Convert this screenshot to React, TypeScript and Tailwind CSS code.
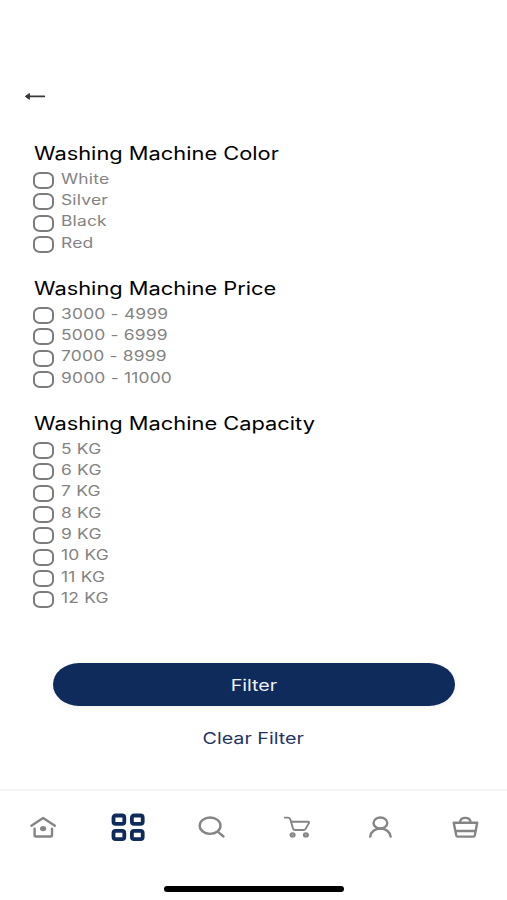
import React, { useState } from 'react';

interface FilterGroup {
  title: string;
  options: string[];
}

const FILTER_GROUPS: FilterGroup[] = [
  { title: 'Washing Machine Color', options: ['White', 'Silver', 'Black', 'Red'] },
  { title: 'Washing Machine Price', options: ['3000 - 4999', '5000 - 6999', '7000 - 8999', '9000 - 11000'] },
  {
    title: 'Washing Machine Capacity',
    options: ['5 KG', '6 KG', '7 KG', '8 KG', '9 KG', '10 KG', '11 KG', '12 KG'],
  },
];

const NavIcon: React.FC<{ children: React.ReactNode; label: string; active?: boolean }> = ({ children, label, active }) => (
  <button aria-label={label} className={active ? 'flex justify-center text-[#0f2b5b]' : 'flex justify-center text-[#858585]'}>
    <svg width="40" height="30" viewBox="0 0 40 30" fill="none" stroke="currentColor" strokeWidth="2.4" strokeLinecap="round" strokeLinejoin="round">
      {children}
    </svg>
  </button>
);

const BottomNav: React.FC = () => (
  <nav className="h-[111px] border-t-2 border-[#f5f5f5] pt-[21px]">
    <div className="grid grid-cols-6">
      <NavIcon label="Home">
        <path d="M9.4 13.7 21.1 6l11.8 7.7M12.6 16.8v6.4q0 1.3 1.5 1.3h14.4q1.5 0 1.5-1.3v-6.4" />
        <ellipse cx="21.1" cy="16.6" rx="3.1" ry="2.7" fill="currentColor" stroke="none" />
      </NavIcon>
      <NavIcon label="Categories" active>
        <g strokeWidth="3.8">
          <rect x="6.5" y="3.5" width="10.8" height="8.4" rx="2.2" />
          <rect x="24.9" y="3.5" width="10.8" height="8.4" rx="2.2" />
          <rect x="6.5" y="18.8" width="10.8" height="8.4" rx="2.2" />
          <rect x="24.9" y="18.8" width="10.8" height="8.4" rx="2.2" />
        </g>
      </NavIcon>
      <NavIcon label="Search">
        <ellipse cx="19.1" cy="13.7" rx="10.4" ry="8.2" />
        <path d="m27 19.8 5.5 4.7" />
      </NavIcon>
      <NavIcon label="Cart">
        <g strokeWidth="1.9">
          <path d="M8.8 5.6h3.1q1.8 0 2.3 1.5l.8 2.6 2.1 7q.4 1.3 1.9 1.3h8.6q1.4 0 2-1.1l3.3-5.8q.8-1.4-1.1-1.4H15" />
          <ellipse cx="16.6" cy="22.9" rx="2.1" ry="1.6" fill="#b5b5b5" />
          <ellipse cx="29.9" cy="22.9" rx="2.1" ry="1.6" fill="#b5b5b5" />
        </g>
      </NavIcon>
      <NavIcon label="Profile">
        <ellipse cx="20.4" cy="11" rx="6.9" ry="5.5" />
        <path d="M10.2 24.6c.6-4.8 4.8-8 10.2-8s9.6 3.2 10.2 8" />
      </NavIcon>
      <NavIcon label="Basket">
        <path d="M8.7 10.7h23.5L29.8 23.4q-.2 1.2-1.5 1.2H12.8q-1.3 0-1.5-1.2ZM10.6 19h19.8M14.9 10.3c.4-2.6 2.6-4.4 5.4-4.4s5 1.8 5.4 4.4" />
      </NavIcon>
    </div>
    <div className="mx-auto mt-[44px] h-[6px] w-[180px] rounded-full bg-black" />
  </nav>
);

const App: React.FC = () => {
  const [selected, setSelected] = useState<string[]>([]);

  const toggle = (option: string) => {
    setSelected(prev => (prev.includes(option) ? prev.filter(o => o !== option) : [...prev, option]));
  };

  return (
    <main className="flex h-[900px] w-full flex-col overflow-hidden bg-white font-['Inter',sans-serif]">
      <header className="h-[141px] pt-[91px] pl-6">
        <button aria-label="Back" className="block">
          <svg width="22" height="11" viewBox="0 0 22 11" className="text-[#383838]">
            <path d="M5 5.4h15.2" stroke="currentColor" strokeWidth="1.9" strokeLinecap="round" />
            <path d="M1.3 5.4 5.4 2.5v5.8Z" fill="currentColor" stroke="currentColor" strokeLinejoin="round" />
          </svg>
        </button>
      </header>

      <div className="flex h-[522px] flex-col gap-[21px] pl-[33px]">
        {FILTER_GROUPS.map(group => (
          <section key={group.title}>
            <h2 className="h-[28.6px] pl-px text-[18px] leading-[25px] text-black">
              <span className="inline-block origin-left scale-x-[1.213]">{group.title}</span>
            </h2>
            {group.options.map(option => (
              <label key={option} className="flex h-[21.35px] items-start">
                <input
                  type="checkbox"
                  checked={selected.includes(option)}
                  onChange={() => toggle(option)}
                  className="mt-[2.4px] h-[17px] w-[21px] appearance-none rounded-[7px/6px] border-2 border-[#7c7c7c] checked:bg-[#0f2b5b]"
                />
                <span className="ml-[6.5px] inline-block origin-left scale-x-[1.245] text-[14px] leading-[18.4px] tracking-[0.15px] text-[#838383]">
                  {option}
                </span>
              </label>
            ))}
          </section>
        ))}
      </div>

      <div className="flex flex-1 flex-col items-center">
        <button className="h-[43px] w-[402px] rounded-[26px/21.5px] bg-[#0f2b5b] text-[16px] text-[#eef1f8] shadow-[0_2px_6px_rgba(0,0,0,0.06)]">
          <span className="inline-block scale-x-[1.23]">Filter</span>
        </button>
        <button onClick={() => setSelected([])} className="mt-5 text-[16px] leading-6 text-[#1f3563]">
          <span className="inline-block scale-x-[1.23]">Clear Filter</span>
        </button>
      </div>

      <BottomNav />
    </main>
  );
};

export default App;
